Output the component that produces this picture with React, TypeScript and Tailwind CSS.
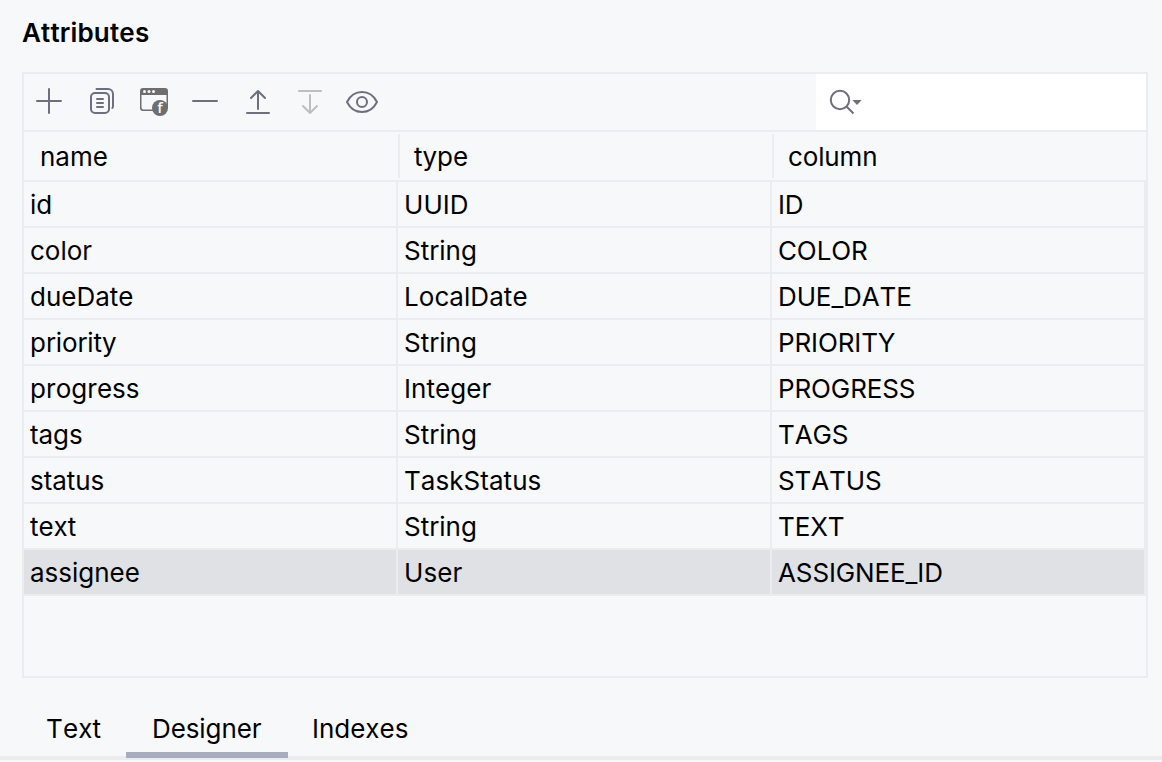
import type { ReactNode } from "react";

type Attribute = { name: string; type: string; column: string };

const attributes: Attribute[] = [
  { name: "id", type: "UUID", column: "ID" },
  { name: "color", type: "String", column: "COLOR" },
  { name: "dueDate", type: "LocalDate", column: "DUE_DATE" },
  { name: "priority", type: "String", column: "PRIORITY" },
  { name: "progress", type: "Integer", column: "PROGRESS" },
  { name: "tags", type: "String", column: "TAGS" },
  { name: "status", type: "TaskStatus", column: "STATUS" },
  { name: "text", type: "String", column: "TEXT" },
  { name: "assignee", type: "User", column: "ASSIGNEE_ID" },
];

const selected = "assignee";

function ToolButton({ label, muted, children }: { label: string; muted?: boolean; children: ReactNode }) {
  return (
    <button aria-label={label} disabled={muted} className={muted ? "size-8 text-[#bdbebf]" : "size-8 text-[#6c707e]"}>
      <svg viewBox="0 0 32 32" className="size-8" fill="none" stroke="currentColor" strokeWidth="2" strokeLinecap="round" strokeLinejoin="round">
        {children}
      </svg>
    </button>
  );
}

function Toolbar() {
  return (
    <div className="flex h-[58px] shrink-0 border-b-2 border-[#ebecf0]">
      <div className="flex flex-1 items-center gap-5 pl-2.5">
        <ToolButton label="Add">
          <path d="M15 3v24M3 15h24" />
        </ToolButton>
        <ToolButton label="Copy">
          <rect x="5" y="7" width="18" height="20" rx="4" />
          <path d="M10.500 3H22a5 5 0 0 1 5 5v12.500q0 1-.7 1.500M11 13h6M11 17h6M11 21h6" />
        </ToolButton>
        <ToolButton label="Form">
          <g stroke="none" fill="#6e6e6e">
            <path fillRule="evenodd" d="M5 2h22a3 3 0 0 1 3 3v17H15v3H5a3 3 0 0 1-3-3V5a3 3 0 0 1 3-3ZM3.500 9v12.500a2 2 0 0 0 2 2H15V22h13.500V9Z" />
            <circle cx="22" cy="22" r="8" />
          </g>
          <g stroke="none" fill="#f7f8fa">
            <circle cx="6.500" cy="5.500" r="1.500" />
            <circle cx="11" cy="5.500" r="1.500" />
            <circle cx="15.500" cy="5.500" r="1.500" />
            <text x="22" y="27.300" textAnchor="middle" fontSize="15" className="font-['Open_Sans',sans-serif] font-semibold">f</text>
          </g>
        </ToolButton>
        <ToolButton label="Remove">
          <path d="M3 15h24" />
        </ToolButton>
        <ToolButton label="Move up">
          <path d="M16 23V5M9 12l7-7 7 7M5 27h22" />
        </ToolButton>
        <ToolButton label="Move down" muted>
          <path d="M16 9v18M9 20l7 7 7-7M5 5h22" />
        </ToolButton>
        <ToolButton label="Preview">
          <path d="M1 16C4.500 9 9.700 6 16 6s11.500 3 15 10c-3.500 7-8.700 10-15 10S4.500 23 1 16Z" />
          <circle cx="16" cy="16" r="5" />
        </ToolButton>
      </div>
      <div className="flex w-[330px] items-center bg-white pl-3 text-[#6c707e]">
        <svg viewBox="0 0 36 32" className="h-8 w-9" fill="none" stroke="currentColor" strokeWidth="2">
          <circle cx="12" cy="14" r="9.200" />
          <path d="m18.500 20.500 7 7" />
          <path d="M24.300 14h9.400L29 19Z" fill="currentColor" stroke="none" />
        </svg>
      </div>
    </div>
  );
}

function HeaderCell({ children }: { children: ReactNode }) {
  return <div className="flex-1 pl-4">{children}</div>;
}

function Row({ item }: { item: Attribute }) {
  const active = item.name === selected;
  return (
    <div className={active ? "flex h-[46px] border-b-2 border-[#ebecf0] bg-[#dfe1e5] leading-[46px]" : "flex h-[46px] border-b-2 border-[#ebecf0] leading-[46px]"}>
      <div className="h-full w-[374px] border-r-2 border-[#ebecf0] pl-1.5">{item.name}</div>
      <div className="h-full w-[374px] border-r-2 border-[#ebecf0] pl-1.5 tracking-[0.06px]">{item.type}</div>
      <div className="h-full w-[374px] border-r-2 border-[#ebecf0] pl-1.5 tracking-[-0.12px]">{item.column}</div>
    </div>
  );
}

function Divider() {
  return <div className="my-0.5 w-0.5 bg-[#ebecf0]" />;
}

export default function App() {
  return (
    <main className="flex h-[762px] w-[1162px] flex-col overflow-hidden bg-[#f7f8fa] font-['Inter',sans-serif] text-[26px] tracking-[-0.02px] text-black [font-kerning:none] [font-feature-settings:'calt'_0]">
      <h1 className="h-[72px] shrink-0 pl-[22px] pt-3 text-[26px] font-semibold leading-[42px] tracking-[0.2px]">Attributes</h1>
      <section className="ml-[22px] flex h-[606px] w-[1126px] shrink-0 flex-col border-2 border-[#ebecf0]">
        <Toolbar />
        <div className="flex h-[50px] shrink-0 border-b-2 border-[#ebecf0] leading-[50px]">
          <div className="flex w-[374px]"><HeaderCell>name</HeaderCell></div>
          <div className="flex w-[374px]"><Divider /><HeaderCell><span className="-ml-0.5">type</span></HeaderCell></div>
          <div className="flex w-[374px]"><Divider /><HeaderCell><span className="-ml-0.5 tracking-[-0.15px]">column</span></HeaderCell></div>
        </div>
        {attributes.map((item) => <Row key={item.name} item={item} />)}
      </section>
      <nav className="flex h-[82px] shrink-0 flex-col">
        <div className="z-10 flex h-20 pl-[22px] pt-6 leading-[54px]">
          <div className="w-[104px] pl-6 tracking-[0.15px]">Text</div>
          <div className="h-14 w-[162px] border-b-6 border-[#a8adbd] pl-[26px] tracking-[-0.1px]">Designer</div>
          <div className="pl-6">Indexes</div>
        </div>
        <div className="-mt-0.5 h-1 shrink-0 bg-[#ebecf0]" />
      </nav>
    </main>
  );
}
